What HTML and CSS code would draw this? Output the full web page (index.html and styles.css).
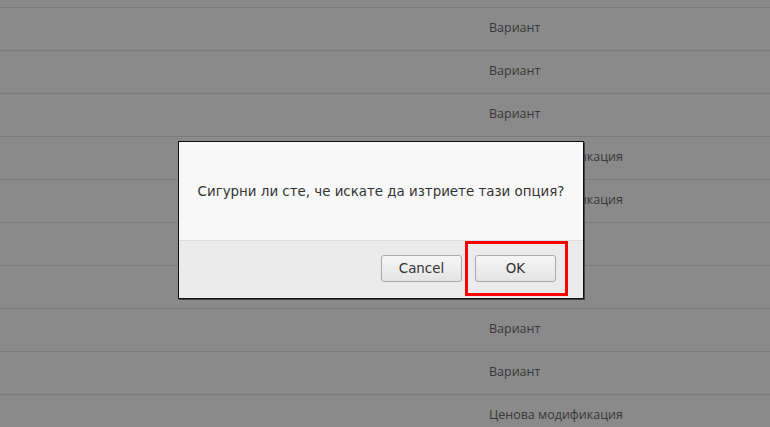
FILE: index.html
```html
<!DOCTYPE html>
<html lang="bg">
<head>
<meta charset="utf-8">
<title>Confirm</title>
<link rel="stylesheet" href="styles.css">
</head>
<body>
<div class="list">
  <div class="row"><span class="cell"></span></div>
  <div class="row"><span class="cell">Вариант</span></div>
  <div class="row"><span class="cell">Вариант</span></div>
  <div class="row"><span class="cell">Вариант</span></div>
  <div class="row"><span class="cell">Ценова модификация</span></div>
  <div class="row"><span class="cell">Ценова модификация</span></div>
  <div class="row"><span class="cell">Вариант</span></div>
  <div class="row"><span class="cell">Вариант</span></div>
  <div class="row"><span class="cell">Вариант</span></div>
  <div class="row"><span class="cell">Вариант</span></div>
  <div class="row"><span class="cell">Ценова модификация</span></div>
</div>
<div class="dialog">
  <div class="dialog-body">Сигурни ли сте, че искате да изтриете тази опция?</div>
  <div class="dialog-footer">
    <button class="btn">Cancel</button>
    <span class="ok-wrap"><button class="btn btn-ok">OK</button><span class="highlight"></span></span>
  </div>
</div>
</body>
</html>
```
FILE: styles.css
```css
html, body {
  margin: 0;
  padding: 0;
  background: #8a8a8a;
  overflow: hidden;
  height: 427px;
}
.list {
  margin-top: -35px;
  display: flex;
  flex-direction: column;
}
.row {
  height: 42px;
  border-bottom: 1px solid #7b7b7b;
  display: flex;
  align-items: center;
  padding: 0 0 3px 489px;
  box-sizing: border-box;
  height: 43px;
  font-family: "Open Sans", sans-serif;
  font-size: 12.5px;
  color: #383838;
}
.dialog {
  position: absolute;
  left: 178px;
  top: 141px;
  width: 404px;
  border: 1px solid #111;
  box-shadow: 1px 1px 0 #444;
  background: #f8f8f8;
  font-family: "DejaVu Sans", sans-serif;
  color: #333;
}
.dialog-body {
  height: 98px;
  display: flex;
  align-items: center;
  justify-content: center;
  font-size: 13.4px;
  padding-top: 1px;
  box-sizing: border-box;
}
.dialog-footer {
  border-top: 1px solid #dcdcdc;
  background: #ebebeb;
  height: 58px;
  display: flex;
  align-items: flex-start;
  justify-content: flex-end;
  gap: 13px;
  padding: 14px 27px 0 0;
  box-sizing: border-box;
}
.btn {
  width: 81px;
  height: 27px;
  border: 1px solid #a9a9a9;
  border-radius: 3px;
  background: linear-gradient(#f6f6f6, #e4e4e4);
  font-family: "DejaVu Sans", sans-serif;
  font-size: 13.4px;
  color: #333;
  padding: 0;
}
.ok-wrap {
  position: relative;
  display: block;
}
.highlight {
  position: absolute;
  left: -10px;
  top: -14px;
  right: -12px;
  bottom: -14px;
  border: 3px solid #ff0000;
}
```
